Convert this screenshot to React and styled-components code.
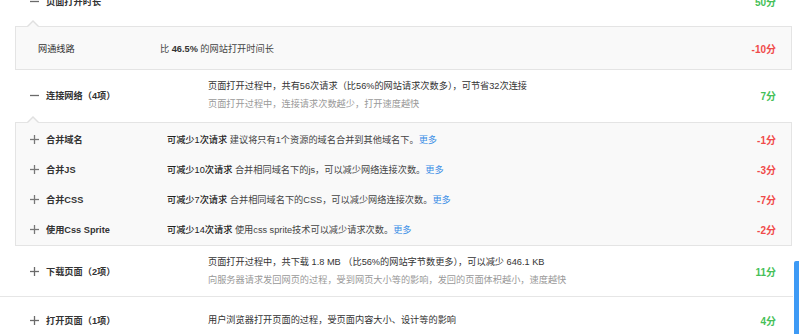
import React from 'react'
import styled, { createGlobalStyle } from 'styled-components';

const GlobalStyle = createGlobalStyle`
    html, body {
        margin: 0;
        padding: 0;
        background: #fff;
        overflow: hidden;
    }
    body {
        font-family: "Liberation Sans", "Noto Sans CJK SC", sans-serif;
        font-size: 9.2px;
        color: #333;
    }
`;

const GREEN = '#45bf58';
const RED = '#f04a4a';

const groups = [
    {
        label: '页面打开时长',
        open: true,
        score: '50分',
        lines: [],
        details: [
            { label: '网通线路', text: <>比 <b>46.5%</b> 的网站打开时间长</>, score: '-10分' },
        ],
    },
    {
        label: '连接网络（4项）',
        open: true,
        score: '7分',
        lines: [
            '页面打开过程中，共有56次请求（比56%的网站请求次数多），可节省32次连接',
            '页面打开过程中，连接请求次数越少，打开速度越快',
        ],
        items: [
            { label: '合并域名', strong: '可减少1次请求', text: ' 建议将只有1个资源的域名合并到其他域名下。', score: '-1分' },
            { label: '合并JS', strong: '可减少10次请求', text: ' 合并相同域名下的js，可以减少网络连接次数。', score: '-3分' },
            { label: '合并CSS', strong: '可减少7次请求', text: ' 合并相同域名下的CSS，可以减少网络连接次数。', score: '-7分' },
            { label: '使用Css Sprite', strong: '可减少14次请求', text: ' 使用css sprite技术可以减少请求次数。', score: '-2分' },
        ],
    },
    {
        label: '下载页面（2项）',
        open: false,
        score: '11分',
        lines: [
            '页面打开过程中，共下载 1.8 MB （比56%的网站字节数更多），可以减少 646.1 KB',
            '向服务器请求发回网页的过程，受到网页大小等的影响，发回的页面体积越小，速度越快',
        ],
    },
    {
        label: '打开页面（1项）',
        open: false,
        score: '4分',
        lines: ['用户浏览器打开页面的过程，受页面内容大小、设计等的影响'],
    },
];

function Toggle({ open }) {
    return (
        <ToggleIcon width="9" height="9" viewBox="0 0 9 9">
            <line x1="0" y1="4.5" x2="9" y2="4.5" />
            {!open && <line x1="4.5" y1="0" x2="4.5" y2="9" />}
        </ToggleIcon>
    )
}

function App() {
    return (
        <Page>
            <GlobalStyle />
            <List>
                {groups.map((g) => (
                    <Group key={g.label} $open={g.open}>
                        <TopRow>
                            <Toggle open={g.open} />
                            <TopLabel>{g.label}</TopLabel>
                            <Desc>
                                {g.lines.map((line, i) => (
                                    <DescLine key={i} $muted={i > 0}>{line}</DescLine>
                                ))}
                            </Desc>
                            <Score $color={GREEN}>{g.score}</Score>
                        </TopRow>
                        {g.details && (
                            <Detail>
                                {g.details.map((d) => (
                                    <PlainRow key={d.label}>
                                        <PlainLabel>{d.label}</PlainLabel>
                                        <ItemText>{d.text}</ItemText>
                                        <Score $color={RED}>{d.score}</Score>
                                    </PlainRow>
                                ))}
                            </Detail>
                        )}
                        {g.items && (
                            <Detail>
                                {g.items.map((it) => (
                                    <ItemRow key={it.label}>
                                        <Toggle open={false} />
                                        <ItemLabel>{it.label}</ItemLabel>
                                        <ItemText>
                                            <Strong>{it.strong}</Strong>{it.text}<More href="#">更多</More>
                                        </ItemText>
                                        <Score $color={RED}>{it.score}</Score>
                                    </ItemRow>
                                ))}
                            </Detail>
                        )}
                    </Group>
                ))}
            </List>
            <SideBar />
        </Page>
    )
}

const Page = styled.div`
    position: relative;
    width: 799px;
    height: 334px;
    overflow: hidden;
`;

const List = styled.div`
    width: 793px;
    margin-top: -22px;
`;

const Group = styled.div`
    border-bottom: ${(p) => (p.$open ? 'none' : '1px solid #e6e6e6')};
`;

const TopRow = styled.div`
    display: flex;
    align-items: center;
    min-height: 46px;
    padding: 7px 17px 7px 30px;
    box-sizing: border-box;
`;

const ToggleIcon = styled.svg`
    flex: none;
    width: 9px;
    height: 9px;
    margin-right: 7px;
    stroke: #6a6a6a;
    stroke-width: 1.3;
`;

const TopLabel = styled.div`
    width: 162px;
    flex: none;
    font-weight: 600;
    color: #333;
`;

const Desc = styled.div`
    flex: 1;
    display: flex;
    flex-direction: column;
`;

const DescLine = styled.div`
    line-height: 18px;
    color: ${(p) => (p.$muted ? '#999' : '#333')};
`;

const Score = styled.div`
    flex: none;
    font-size: 10px;
    font-weight: 700;
    color: ${(p) => p.$color};
    text-align: right;
`;

const Detail = styled.div`
    position: relative;
    margin: 2px 1px 0 15px;
    padding: 1px 0;
    background: #f9f9f9;
    border: 1px solid #e4e4e4;

    &::before,
    &::after {
        content: '';
        position: absolute;
        left: 11px;
        width: 0;
        height: 0;
        border-left: 6px solid transparent;
        border-right: 6px solid transparent;
    }
    &::before {
        top: -7px;
        border-bottom: 6px solid #e0e0e0;
    }
    &::after {
        top: -5.5px;
        border-bottom: 6px solid #f9f9f9;
    }
`;

const PlainRow = styled.div`
    display: flex;
    align-items: center;
    height: 40px;
    padding: 0 15px 0 22px;
`;

const PlainLabel = styled.div`
    width: 122px;
    flex: none;
`;

const ItemRow = styled.div`
    display: flex;
    align-items: center;
    height: 30px;
    padding: 0 15px 0 14px;

    svg {
        stroke: #777;
        margin-right: 7px;
    }
`;

const ItemLabel = styled.div`
    width: 121px;
    flex: none;
    font-weight: 600;
    color: #333;
`;

const ItemText = styled.div`
    flex: 1;
    color: #444;

    b {
        font-weight: 700;
        color: #333;
    }
`;

const Strong = styled.span`
    font-weight: 500;
    color: #222;
`;

const More = styled.a`
    color: #3a8ee6;
    text-decoration: none;
`;

const SideBar = styled.div`
    position: absolute;
    right: 0;
    top: 261px;
    width: 5px;
    height: 80px;
    background: #3d9af5;
    border-radius: 2px 0 0 0;
`;

export default App;
